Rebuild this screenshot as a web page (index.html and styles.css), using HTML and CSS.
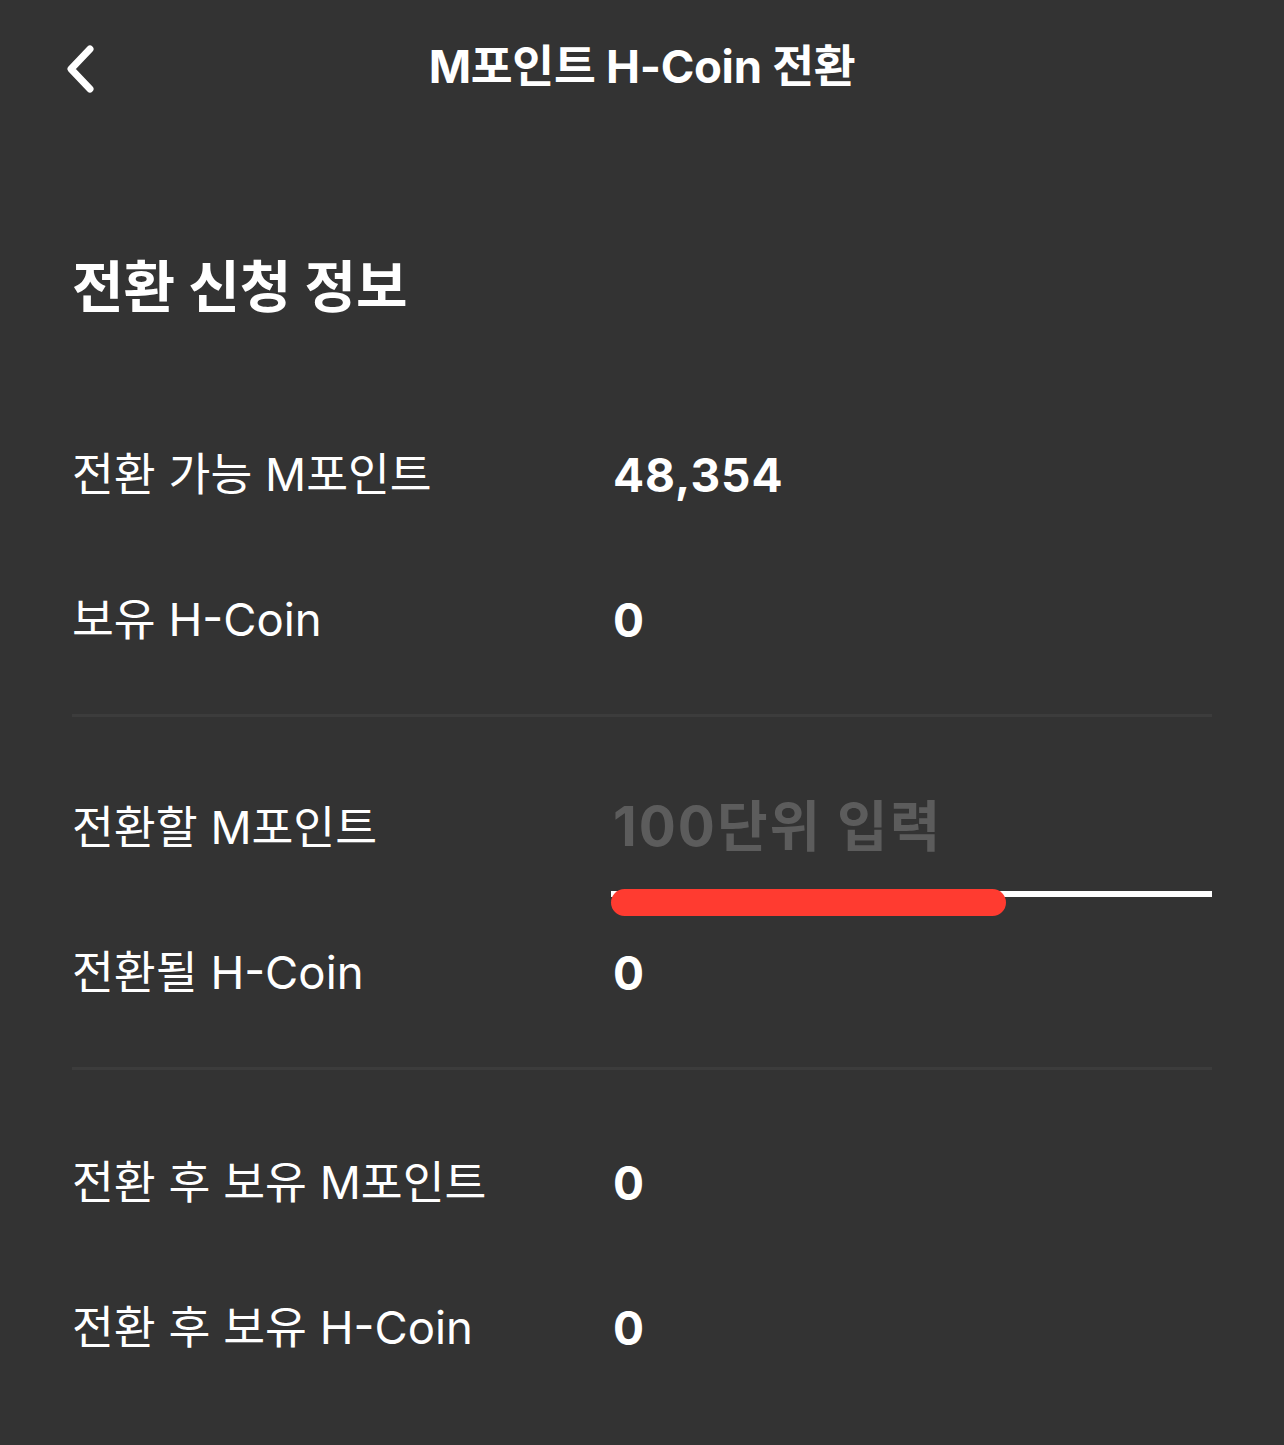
FILE: index.html
```html
<!DOCTYPE html>
<html lang="ko">
<head>
<meta charset="utf-8">
<title>M포인트 H-Coin 전환</title>
<link rel="stylesheet" href="styles.css">
</head>
<body>
<header class="topbar">
  <div class="back">
    <svg width="34" height="50" viewBox="0 0 34 50" aria-hidden="true">
      <path d="M26 5 L7 25 L26 45" fill="none" stroke="#ffffff" stroke-width="7" stroke-linecap="round" stroke-linejoin="round"/>
    </svg>
  </div>
  <h1 class="title">M포인트 H-Coin 전환</h1>
  <div></div>
</header>
<main class="content">
  <h2 class="section-title">전환 신청 정보</h2>
  <div class="row"><span class="label">전환 가능 M포인트</span><span class="value">48,354</span></div>
  <div class="row"><span class="label">보유 H-Coin</span><span class="value">0</span></div>
  <div class="divider"></div>
  <div class="row">
    <span class="label">전환할 M포인트</span>
    <div class="input">
      <span class="placeholder">100단위 입력</span>
      <span class="mark"></span>
    </div>
  </div>
  <div class="row"><span class="label">전환될 H-Coin</span><span class="value">0</span></div>
  <div class="divider divider-last"></div>
  <div class="row"><span class="label">전환 후 보유 M포인트</span><span class="value">0</span></div>
  <div class="row"><span class="label">전환 후 보유 H-Coin</span><span class="value">0</span></div>
</main>
</body>
</html>
```

FILE: styles.css
```css
* { box-sizing: border-box; }
html, body {
  margin: 0;
  padding: 0;
  background: #333333;
  color: #ffffff;
  font-family: "Inter", "Noto Sans CJK KR", sans-serif;
}
body { min-height: 1445px; }

.topbar {
  height: 134px;
  display: grid;
  grid-template-columns: 1fr auto 1fr;
  align-items: center;
}
.back {
  display: flex;
  align-items: center;
  height: 50px;
  padding-left: 64px;
  margin-top: 3px;
}
.back svg { display: block; }
.title {
  margin: 0;
  font-size: 45.5px;
  font-weight: 700;
  line-height: 60px;
  letter-spacing: -0.3px;
}

.content { padding: 0 72px; }

.section-title {
  margin: 118px 0 80px;
  font-size: 56px;
  font-weight: 700;
  line-height: 70px;
}

.row {
  height: 145px;
  display: grid;
  grid-template-columns: 539px 1fr;
  align-items: center;
}
.label {
  font-size: 45.5px;
  font-weight: 400;
  line-height: 60px;
}
.value {
  padding-left: 2px;
  font-size: 46px;
  font-weight: 700;
  line-height: 60px;
  letter-spacing: 1px;
}

.divider {
  height: 3px;
  background: #3c3c3c;
  margin: 22px 0 38px;
}
.divider-last { margin-bottom: 40px; }

.input {
  align-self: end;
  margin-bottom: 3px;
  position: relative;
  padding: 0 0 30px 2px;
  border-bottom: 6px solid #ffffff;
}
.placeholder {
  display: block;
  font-size: 55px;
  font-weight: 700;
  line-height: 70px;
  color: #5c5c5c;
  letter-spacing: 2px;
}
.mark {
  position: absolute;
  left: 0;
  bottom: -25px;
  width: 395px;
  height: 27px;
  border-radius: 14px;
  background: #ff3b30;
}
```
